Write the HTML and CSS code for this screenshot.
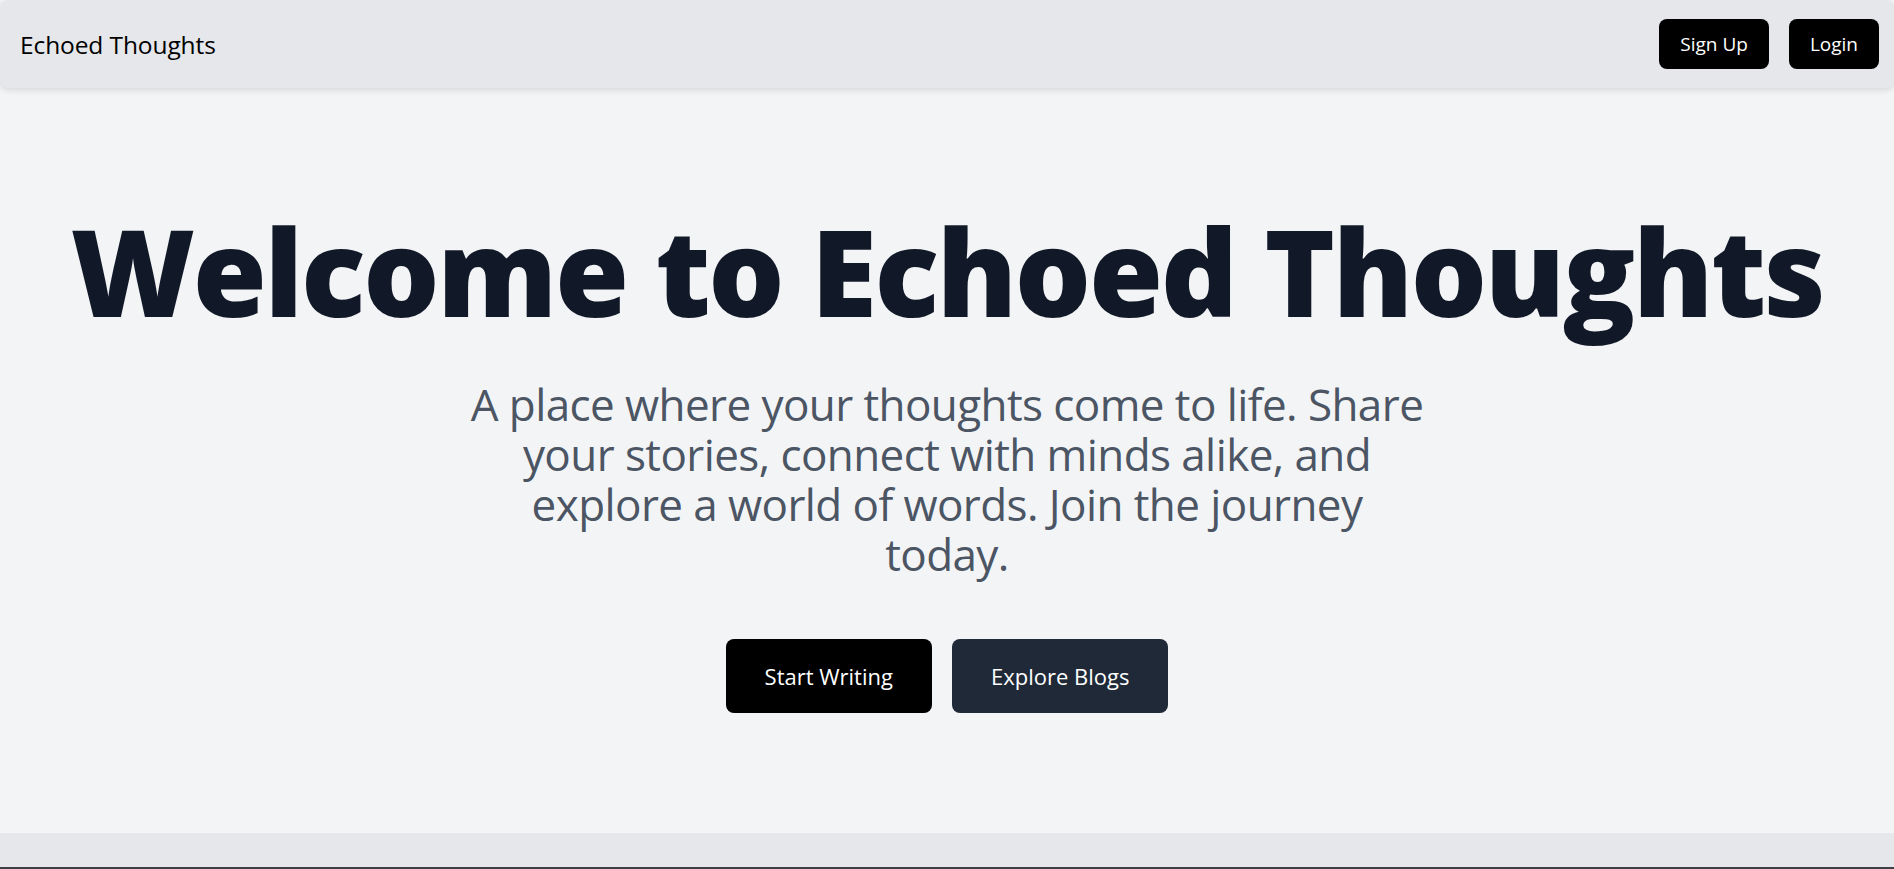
FILE: index.html
```html
<!DOCTYPE html>
<html lang="en">
<head>
<meta charset="utf-8">
<title>Echoed Thoughts</title>
<link rel="stylesheet" href="styles.css">
</head>
<body>
<nav class="navbar">
  <a class="brand" href="#">Echoed Thoughts</a>
  <div class="nav-actions">
    <button class="nav-btn">Sign Up</button>
    <button class="nav-btn">Login</button>
  </div>
</nav>
<main class="hero">
  <h1 class="hero-title">Welcome to Echoed Thoughts</h1>
  <p class="hero-text">A place where your thoughts come to life. Share your stories, connect with minds alike, and explore a world of words. Join the journey today.</p>
  <div class="hero-actions">
    <button class="hero-btn hero-btn-primary">Start Writing</button>
    <button class="hero-btn hero-btn-secondary">Explore Blogs</button>
  </div>
</main>
<footer class="footer">
  <div class="footer-band"></div>
  <div class="footer-dark"></div>
</footer>
</body>
</html>
```

FILE: styles.css
```css
* { box-sizing: border-box; }
html, body { margin: 0; padding: 0; }
body {
  background: #f3f4f6;
  font-family: "Open Sans", "Noto Sans", sans-serif;
  color: #000;
  overflow: hidden;
}
.navbar {
  height: 88px;
  background: #e5e7eb;
  border-radius: 8px;
  box-shadow: 0 2px 6px rgba(0,0,0,0.12);
  display: flex;
  align-items: center;
  justify-content: space-between;
  padding: 0 15px 0 20px;
  position: relative;
  z-index: 1;
}
.brand {
  font-size: 24.5px;
  color: #000;
  text-decoration: none;
  letter-spacing: -0.1px;
}
.nav-actions {
  display: flex;
  gap: 20px;
}
.nav-btn {
  height: 50px;
  padding: 0 21px;
  background: #000;
  color: #fff;
  border: none;
  border-radius: 8px;
  font-family: inherit;
  font-size: 19px;
  cursor: pointer;
}
.hero {
  height: 745px;
  padding-top: 123px;
  display: flex;
  flex-direction: column;
  align-items: center;
  text-align: center;
}
.hero-title {
  margin: 0;
  font-size: 120px;
  line-height: 1;
  font-weight: 800;
  color: #111827;
  letter-spacing: -2.4px;
  white-space: nowrap;
}
.hero-text {
  margin: 48px 0 0;
  max-width: 958px;
  font-size: 44px;
  line-height: 50px;
  letter-spacing: -0.58px;
  color: #4b5563;
}
.hero-actions {
  margin-top: 60px;
  display: flex;
  gap: 20px;
}
.hero-btn {
  height: 74px;
  padding: 0 39px;
  border: none;
  border-radius: 8px;
  color: #fff;
  font-family: inherit;
  font-size: 22px;
  cursor: pointer;
}
.hero-btn-primary { background: #000; }
.hero-btn-secondary { background: #1f2937; }
.footer-band {
  height: 34px;
  background: #e5e7eb;
}
.footer-dark {
  height: 2px;
  background: #3f3f46;
}
```
